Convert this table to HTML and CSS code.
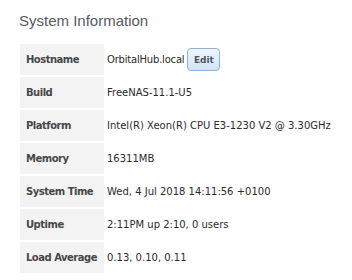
FILE: index.html
```html
<!DOCTYPE html>
<html>
<head>
<meta charset="utf-8">
<link rel="stylesheet" href="styles.css">
</head>
<body>
<div class="panel">
  <h1 class="title">System Information</h1>
  <table class="info">
    <tr><th>Hostname</th><td><span class="host">OrbitalHub.local</span><button class="edit">Edit</button></td></tr>
    <tr><th>Build</th><td>FreeNAS-11.1-U5</td></tr>
    <tr><th>Platform</th><td>Intel(R) Xeon(R) CPU E3-1230 V2 @ 3.30GHz</td></tr>
    <tr><th>Memory</th><td>16311MB</td></tr>
    <tr><th>System Time</th><td>Wed, 4 Jul 2018 14:11:56 +0100</td></tr>
    <tr><th>Uptime</th><td>2:11PM up 2:10, 0 users</td></tr>
    <tr><th>Load Average</th><td>0.13, 0.10, 0.11</td></tr>
  </table>
</div>
</body>
</html>
```
FILE: styles.css
```css
html, body {
  margin: 0;
  background: #fff;
}
.panel {
  padding: 12px 20px 0 19px;
}
.title {
  margin: 0 0 14px 0;
  font-family: "Liberation Sans", Arial, sans-serif;
  font-weight: normal;
  font-size: 15px;
  line-height: 18px;
  color: #555a63;
}
.info {
  border-collapse: separate;
  border-spacing: 0 2px;
  margin: -2px 0 0 1px;
  font-family: "DejaVu Sans", Verdana, sans-serif;
  font-size: 10px;
  color: #2a2a2a;
}
.info th {
  background: #f3f3f3;
  text-align: left;
  font-weight: bold;
  letter-spacing: -0.5px;
  color: #474747;
  height: 31px;
  padding: 0 7px 0 6px;
  width: 71px;
  white-space: nowrap;
}
.info td {
  padding: 0 0 0 3px;
  height: 31px;
  white-space: nowrap;
}
.host {
  vertical-align: middle;
  letter-spacing: -0.2px;
}
.edit {
  margin-left: 3px;
  vertical-align: middle;
  height: 23px;
  width: 33px;
  padding: 0;
  border: 1px solid #8fb0d6;
  border-radius: 4px;
  background: linear-gradient(#eef5fd, #d3e4f7);
  font-family: "DejaVu Sans", Verdana, sans-serif;
  font-size: 9px;
  font-weight: bold;
  color: #4a5563;
}
```
